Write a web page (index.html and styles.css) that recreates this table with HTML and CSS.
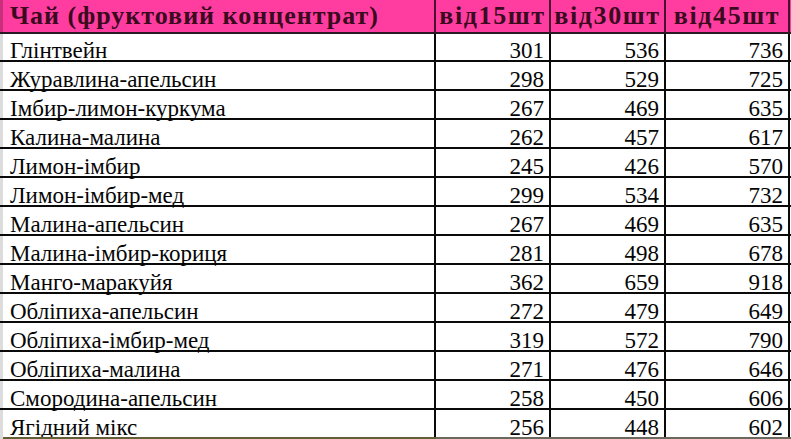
FILE: index.html
```html
<!DOCTYPE html>
<html lang="uk">
<head>
<meta charset="utf-8">
<link rel="stylesheet" href="styles.css">
</head>
<body>
<div class="sheet">
  <div class="row head">
    <div class="gut"></div>
    <div class="c name">Чай (фруктовий концентрат)</div>
    <div class="c hnum">від15шт</div>
    <div class="c hnum">від30шт</div>
    <div class="c hnum">від45шт</div>
  </div>
  <div class="row first"><div class="gut"></div><div class="c name">Глінтвейн</div><div class="c num">301</div><div class="c num">536</div><div class="c num">736</div></div>
  <div class="row"><div class="gut"></div><div class="c name">Журавлина-апельсин</div><div class="c num">298</div><div class="c num">529</div><div class="c num">725</div></div>
  <div class="row"><div class="gut"></div><div class="c name">Імбир-лимон-куркума</div><div class="c num">267</div><div class="c num">469</div><div class="c num">635</div></div>
  <div class="row"><div class="gut"></div><div class="c name">Калина-малина</div><div class="c num">262</div><div class="c num">457</div><div class="c num">617</div></div>
  <div class="row"><div class="gut"></div><div class="c name">Лимон-імбир</div><div class="c num">245</div><div class="c num">426</div><div class="c num">570</div></div>
  <div class="row"><div class="gut"></div><div class="c name">Лимон-імбир-мед</div><div class="c num">299</div><div class="c num">534</div><div class="c num">732</div></div>
  <div class="row"><div class="gut"></div><div class="c name">Малина-апельсин</div><div class="c num">267</div><div class="c num">469</div><div class="c num">635</div></div>
  <div class="row"><div class="gut"></div><div class="c name">Малина-імбир-кориця</div><div class="c num">281</div><div class="c num">498</div><div class="c num">678</div></div>
  <div class="row"><div class="gut"></div><div class="c name">Манго-маракуйя</div><div class="c num">362</div><div class="c num">659</div><div class="c num">918</div></div>
  <div class="row"><div class="gut"></div><div class="c name">Обліпиха-апельсин</div><div class="c num">272</div><div class="c num">479</div><div class="c num">649</div></div>
  <div class="row"><div class="gut"></div><div class="c name">Обліпиха-імбир-мед</div><div class="c num">319</div><div class="c num">572</div><div class="c num">790</div></div>
  <div class="row"><div class="gut"></div><div class="c name">Обліпиха-малина</div><div class="c num">271</div><div class="c num">476</div><div class="c num">646</div></div>
  <div class="row"><div class="gut"></div><div class="c name">Смородина-апельсин</div><div class="c num">258</div><div class="c num">450</div><div class="c num">606</div></div>
  <div class="row final"><div class="gut"></div><div class="c name">Ягідний мікс</div><div class="c num">256</div><div class="c num">448</div><div class="c num">602</div></div>
  <div class="footer"><div class="gut"></div><div class="olive"></div><div class="grey"></div></div>
</div>
</body>
</html>
```
FILE: styles.css
```css
html, body {
  margin: 0;
  padding: 0;
  background: #ffffff;
  overflow: hidden;
  font-family: "Liberation Serif", serif;
}
.sheet {
  width: 791px;
  height: 439px;
  font-family: "Liberation Serif", serif;
  color: #050505;
  overflow: hidden;
}
.row {
  display: grid;
  grid-template-columns: 3px 433px 115px 115px 124px 1px;
  height: 29px;
  box-sizing: border-box;
  border-bottom: 2px solid #0a0a0a;
}
.row .gut {
  background: #dcdcdc;
}
.c {
  display: flex;
  align-items: flex-end;
  border-right: 2px solid #0a0a0a;
  font-family: "Liberation Serif", serif;
  font-size: 23px;
  line-height: 19px;
  white-space: nowrap;
  overflow: visible;
}
.name {
  padding-left: 7px;
}
.num {
  justify-content: flex-end;
  padding-right: 5px;
}
.first {
  height: 28px;
}
.head {
  height: 34px;
  background: #ff3da0;
  border-bottom: 2px solid #2a1822;
}
.head .gut {
  background: #c8307c;
}
.head .c {
  font-weight: bold;
  color: #3a0a1e;
  font-size: 26px;
  line-height: 24px;
  letter-spacing: 1px;
  border-right-color: #4a1030;
  padding-bottom: 4px;
}
.head .hnum {
  justify-content: center;
  letter-spacing: 1.6px;
}
.final {
  border-bottom: none;
  height: 27px;
}
.footer {
  display: grid;
  grid-template-columns: 3px 433px 355px;
  height: 3px;
}
.footer .gut { background: #dcdcdc; }
.olive { background: #625f34; }
.grey { background: #6a6a5c; }
```
